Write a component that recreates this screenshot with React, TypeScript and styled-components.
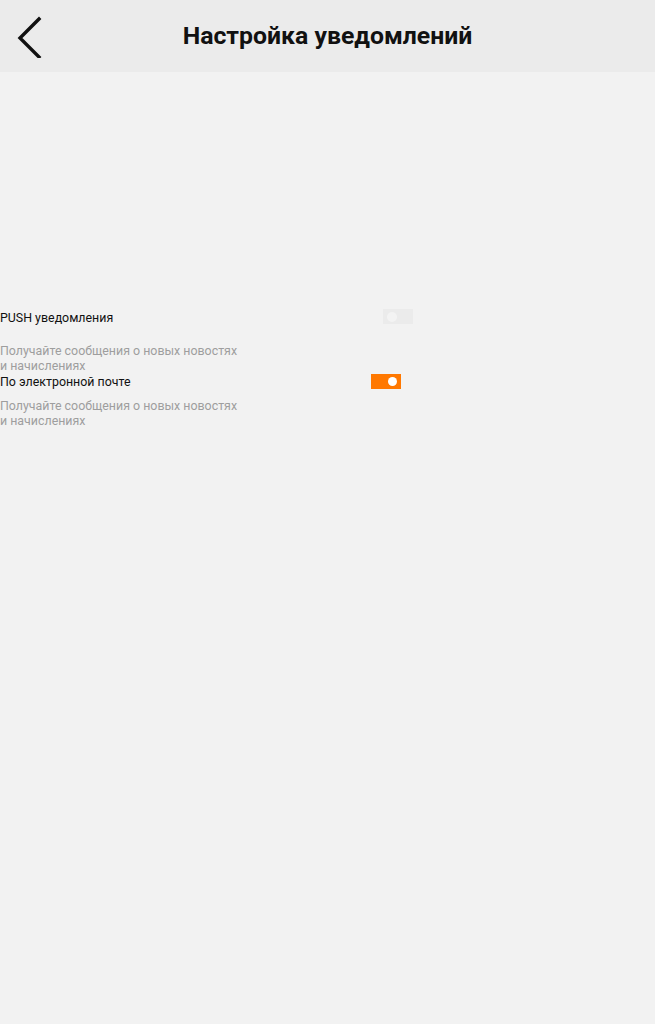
import React from "react";
import styled, { createGlobalStyle } from "styled-components";

const Global = createGlobalStyle`
  html, body { margin: 0; padding: 0; background: #f2f2f2; }
  body { font-family: Roboto, "Noto Sans", Arial, sans-serif; }
`;

const Page = styled.div`
  width: 655px;
  min-height: 1024px;
  background: #f2f2f2;
`;

const Header = styled.header`
  height: 72px;
  background: #ebebeb;
  display: grid;
  grid-template-columns: 60px 1fr 60px;
  align-items: center;
`;

const BackButton = styled.button`
  border: 0;
  background: none;
  padding: 0 0 0 14px;
  height: 72px;
  display: flex;
  align-items: center;
  cursor: pointer;
`;

const Title = styled.h1`
  margin: 0 0 2px;
  text-align: center;
  font-size: 24.8px;
  font-weight: 700;
  color: #111;
`;

const Content = styled.main`
  padding-top: 238px;
  display: flex;
  flex-direction: column;
`;

const Setting = styled.section<{ $gap: number; $after: number }>`
  display: flex;
  flex-direction: column;
  gap: ${(p) => p.$gap}px;
  margin-bottom: ${(p) => p.$after}px;
`;

const Row = styled.div<{ $width: number }>`
  width: ${(p) => p.$width}px;
  display: flex;
  justify-content: space-between;
  align-items: flex-start;
`;

const Label = styled.span`
  font-size: 12.4px;
  line-height: 15px;
  color: #111;
`;

const Description = styled.p`
  margin: 0;
  width: 242px;
  font-size: 12.4px;
  line-height: 15px;
  color: #9e9e9e;
`;

const Toggle = styled.span<{ $on: boolean }>`
  width: 30px;
  height: 15px;
  margin-top: ${(p) => (p.$on ? 0 : -1)}px;
  background: ${(p) => (p.$on ? "#ff7800" : "#ebebeb")};
  display: flex;
  align-items: center;
  justify-content: ${(p) => (p.$on ? "flex-end" : "flex-start")};
  padding: 0 4px;
  box-sizing: border-box;
`;

const Knob = styled.span<{ $on: boolean }>`
  width: ${(p) => (p.$on ? 9 : 10)}px;
  height: ${(p) => (p.$on ? 9 : 10)}px;
  border-radius: 50%;
  background: ${(p) => (p.$on ? "#ffffff" : "#f3f3f3")};
`;

export default function App() {
  return (
    <Page>
      <Global />
      <Header>
        <BackButton aria-label="Назад">
          <svg width="30" height="44" viewBox="0 0 30 44">
            <path d="M25 5 L6 24 L25 43" fill="none" stroke="#111" strokeWidth="3.4" strokeLinecap="square" />
          </svg>
        </BackButton>
        <Title>Настройка уведомлений</Title>
        <span />
      </Header>
      <Content>
        <Setting $gap={18} $after={1}>
          <Row $width={413}>
            <Label>PUSH уведомления</Label>
            <Toggle $on={false}>
              <Knob $on={false} />
            </Toggle>
          </Row>
          <Description>Получайте сообщения о новых новостях и начислениях</Description>
        </Setting>
        <Setting $gap={9} $after={0}>
          <Row $width={401}>
            <Label>По электронной почте</Label>
            <Toggle $on={true}>
              <Knob $on={true} />
            </Toggle>
          </Row>
          <Description>Получайте сообщения о новых новостях и начислениях</Description>
        </Setting>
      </Content>
    </Page>
  );
}
